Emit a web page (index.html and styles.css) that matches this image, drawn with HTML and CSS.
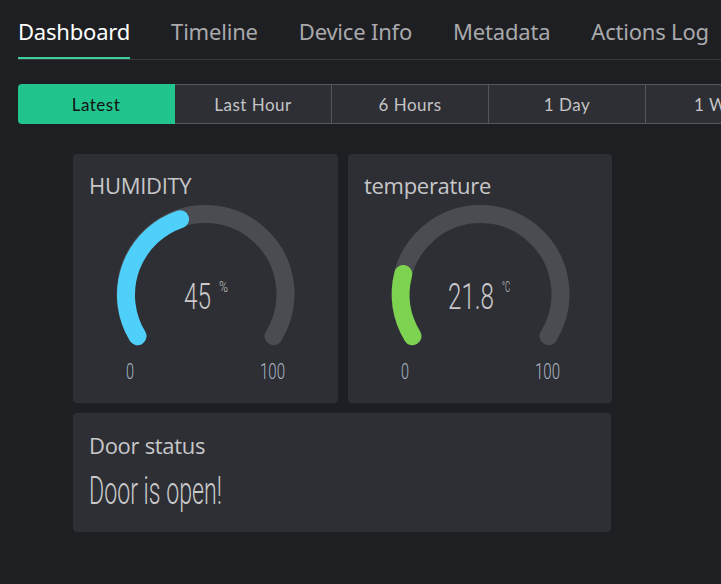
FILE: index.html
```html
<!DOCTYPE html>
<html>
<head>
<meta charset="utf-8">
<link rel="stylesheet" href="styles.css">
</head>
<body>
<nav class="tabs">
  <a class="tab active">Dashboard</a>
  <a class="tab">Timeline</a>
  <a class="tab">Device Info</a>
  <a class="tab">Metadata</a>
  <a class="tab">Actions Log</a>
</nav>
<div class="ranges">
  <button class="range active">Latest</button>
  <button class="range">Last Hour</button>
  <button class="range">6 Hours</button>
  <button class="range">1 Day</button>
  <button class="range">1 Week</button>
</div>
<main class="grid">
  <section class="card">
    <h2 class="card-title">HUMIDITY</h2>
    <svg class="gauge" width="233" height="192" viewBox="0 0 233 192">
      <path class="track" d="M 48.5 139.2 A 80 80 0 1 1 184.5 139.2" />
      <path class="fill blue" d="M 48.5 139.2 A 80 80 0 0 1 91 22.2" />
      <text class="value" x="122" y="112" text-anchor="end" textLength="27" lengthAdjust="spacingAndGlyphs">45</text>
      <text class="unit" x="130" y="95" textLength="9" lengthAdjust="spacingAndGlyphs">%</text>
      <text class="label" x="41" y="182" text-anchor="middle" textLength="8" lengthAdjust="spacingAndGlyphs">0</text>
      <text class="label" x="183.5" y="182" text-anchor="middle" textLength="25" lengthAdjust="spacingAndGlyphs">100</text>
    </svg>
  </section>
  <section class="card">
    <h2 class="card-title">temperature</h2>
    <svg class="gauge" width="233" height="192" viewBox="0 0 233 192">
      <path class="track" d="M 48.5 139.2 A 80 80 0 1 1 184.5 139.2" />
      <path class="fill green" d="M 48.5 139.2 A 80 80 0 0 1 39.3 77" />
      <text class="value" x="130" y="112" text-anchor="end" textLength="46" lengthAdjust="spacingAndGlyphs">21.8</text>
      <text class="unit" x="138" y="95" textLength="8" lengthAdjust="spacingAndGlyphs">°C</text>
      <text class="label" x="41" y="182" text-anchor="middle" textLength="8" lengthAdjust="spacingAndGlyphs">0</text>
      <text class="label" x="183.5" y="182" text-anchor="middle" textLength="25" lengthAdjust="spacingAndGlyphs">100</text>
    </svg>
  </section>
  <section class="card wide">
    <h2 class="card-title">Door status</h2>
    <svg class="status" width="260" height="56" viewBox="0 0 260 56">
      <text x="0" y="45" textLength="133" lengthAdjust="spacingAndGlyphs">Door is open!</text>
    </svg>
  </section>
</main>
</body>
</html>
```
FILE: styles.css
```css
html, body {
  margin: 0;
  padding: 0;
  background: #1e1f23;
  width: 721px;
  height: 584px;
  overflow: hidden;
}
body {
  font-family: "Open Sans", "Noto Sans", sans-serif;
}
.tabs {
  display: flex;
  gap: 41px;
  margin-left: 18px;
  border-bottom: 1px solid #393a3e;
  height: 60px;
  box-sizing: border-box;
  padding-top: 16px;
  overflow: hidden;
}
.tab {
  font-family: "Noto Sans", sans-serif;
  font-size: 22px;
  line-height: 30px;
  color: #a9a9ab;
  white-space: nowrap;
  letter-spacing: -0.2px;
  height: 43px;
  box-sizing: border-box;
}
.tab.active {
  color: #ffffff;
  border-bottom: 2px solid #3ecf9a;
}
.ranges {
  display: flex;
  margin: 24px 0 0 18px;
  width: 703px;
  overflow: hidden;
}
.range {
  flex: 0 0 157px;
  height: 40px;
  box-sizing: border-box;
  background: #2e2f34;
  border: 1px solid #55565b;
  border-left: none;
  color: #c4c4c6;
  font-family: "Lato", sans-serif;
  font-size: 17px;
  letter-spacing: 0.5px;
  padding: 0;
  white-space: nowrap;
  text-align: center;
}
.range:last-child {
  text-align: left;
  padding-left: 48px;
}
.range.active {
  background: #22c48e;
  color: #111;
  border-color: #22c48e;
  border-radius: 4px 0 0 4px;
}
.grid {
  display: grid;
  grid-template-columns: 265px 264px;
  gap: 10px;
  margin: 30px 0 0 73px;
}
.card {
  background: #2e2f34;
  border-radius: 4px;
  padding: 17px 16px 0;
  height: 249px;
  box-sizing: border-box;
  overflow: hidden;
}
.card.wide {
  grid-column: 1 / span 2;
  width: 538px;
  height: 119px;
  padding-top: 18px;
}
.card-title {
  margin: 0;
  font-family: "Open Sans", sans-serif;
  font-weight: 400;
  font-size: 22px;
  line-height: 28px;
  color: #c7c7c9;
  letter-spacing: -0.3px;
}
.gauge {
  display: block;
  margin-top: -2px;
}
.track, .fill {
  fill: none;
  stroke-width: 18;
  stroke-linecap: round;
}
.track { stroke: #4b4c51; }
.blue { stroke: #4fd0fb; }
.green { stroke: #7dd350; }
.value {
  font-family: "Roboto", sans-serif;
  font-weight: 300;
  font-size: 37px;
  fill: #c9c9cb;
}
.unit {
  font-family: "Roboto", sans-serif;
  font-weight: 300;
  font-size: 15px;
  fill: #c9c9cb;
}
.label {
  font-family: "Roboto", sans-serif;
  font-weight: 300;
  font-size: 22px;
  fill: #a9b6c4;
}
.status {
  display: block;
  margin-top: 0;
}
.status text {
  font-family: "Roboto", sans-serif;
  font-weight: 300;
  font-size: 38px;
  fill: #c9c9cb;
}
```
